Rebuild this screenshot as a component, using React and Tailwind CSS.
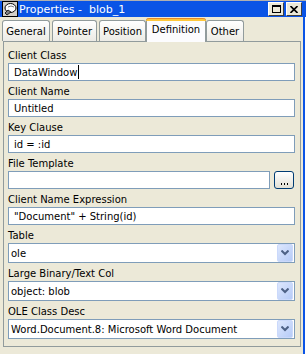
import React from "react";

const font = { fontFamily: '"DejaVu Sans", Verdana, sans-serif' };

const TitleIcon = () => (
	<svg width="16" height="16" viewBox="0 0 16 16">
		<rect x="0.5" y="0.5" width="15" height="15" fill="#d4d0c8" stroke="#000" />
		<ellipse cx="8.5" cy="7" rx="5.5" ry="4.5" fill="#fff" stroke="#000" />
		<path d="M3 12 L6 9 L9 11 L5 14 Z" fill="#808080" stroke="#000" strokeWidth="0.8" />
		<path d="M6 6 Q9 4 12 6" stroke="#808080" fill="none" />
	</svg>
);

const Tab = ({ label, width, ml, selected }) =>
	selected ? (
		<div
			className={`relative z-10 ${width} ${ml} h-[24px] -mb-px bg-[#fcfcfe] border-x border-[#919b9c] rounded-t-[3px] flex flex-col`}
		>
			<div className="h-[3px] bg-[#ffc83c] border-t border-[#e68b2c] rounded-t-[3px] -mx-px" />
			<div className="flex-1 flex items-center justify-center pb-[4px] text-[10px] text-black">
				{label}
			</div>
		</div>
	) : (
		<div
			className={`${width} ${ml} h-[21px] border border-b-0 border-[#919b9c] rounded-t-[3px] bg-gradient-to-b from-white to-[#ecebe5] flex items-center justify-center pt-[1px] text-[10px] text-black`}
		>
			{label}
		</div>
	);

const Field = ({ label, children }) => (
	<div className="flex flex-col">
		<div className="h-[18px] pt-[4px] leading-[14px] text-[10px] text-black">{label}</div>
		{children}
	</div>
);

const TextBox = ({ value, cursor, className = "w-full" }) => (
	<div
		className={`${className} h-[18px] bg-white border border-[#7f9db9] pl-[5px] flex items-center text-[10px] text-black whitespace-pre`}
	>
		{value}
		{cursor && <span className="inline-block w-px h-[14px] bg-black ml-px" />}
	</div>
);

const Select = ({ value }) => (
	<div className="w-full h-[20px] bg-white border border-[#7f9db9] pl-[2px] pr-px py-px flex items-center text-[10px] text-black">
		<span className="flex-1">{value}</span>
		<div className="w-[16px] h-[18px] rounded-[2px] bg-gradient-to-br from-[#dde7fd] to-[#b6cbf7] border border-[#cbd9fb] flex items-center justify-center">
			<svg width="8" height="6" viewBox="0 0 8 6">
				<path d="M0.5 0.5 L4 4 L7.5 0.5" stroke="#4d6185" strokeWidth="2" fill="none" />
			</svg>
		</div>
	</div>
);

export default function App() {
	return (
		<div className="w-[306px] h-[354px] bg-[#ece9d8] flex flex-col overflow-hidden" style={font}>
			<div className="h-[17px] border-t border-[#b0b0b0] bg-[#0a54e6] flex items-center pl-[2px] pr-[4px]">
				<TitleIcon />
				<span className="ml-[1px] text-[11px] text-white whitespace-pre leading-none">Properties -  blob_1</span>
				<div className="flex-1" />
				<div className="w-[16px] h-[14px] bg-[#ece9d8] border border-t-white border-l-white border-r-[#404040] border-b-[#404040] flex items-center justify-center">
					<div className="w-[9px] h-[8px] border border-black border-t-2" />
				</div>
				<div className="ml-[2px] w-[16px] h-[14px] bg-[#ece9d8] border border-t-white border-l-white border-r-[#404040] border-b-[#404040] flex items-center justify-center">
					<svg width="8" height="7" viewBox="0 0 8 7">
						<path d="M0.5 0 L7.5 7 M7.5 0 L0.5 7" stroke="#000" strokeWidth="1.6" />
					</svg>
				</div>
			</div>
			<div className="flex flex-1">
				<div className="flex-1 flex flex-col">
					<div className="flex items-end h-[24px]">
						<Tab label="General" width="w-[48px]" ml="ml-[2px]" />
						<Tab label="Pointer" width="w-[45px]" ml="ml-[2px]" />
						<Tab label="Position" width="w-[47px]" ml="ml-[2px]" />
						<Tab label="Definition" width="w-[60px]" ml="ml-0" selected />
						<Tab label="Other" width="w-[38px]" ml="ml-0" />
					</div>
					<div className="ml-[3px] mr-[2px] h-[306px] border border-[#919b9c] bg-[#ece9d8] pt-[3px] pl-[4px] pr-[5px] flex flex-col">
						<Field label="Client Class">
							<TextBox value="DataWindow" cursor />
						</Field>
						<Field label="Client Name">
							<TextBox value="Untitled" />
						</Field>
						<Field label="Key Clause">
							<TextBox value="id = :id" />
						</Field>
						<Field label="File Template">
							<div className="flex">
								<TextBox value="" className="w-[262px]" />
								<div className="ml-[4px] w-[20px] h-[18px] rounded-[3px] border border-[#003c74] bg-gradient-to-b from-white to-[#e3e1d6] flex items-end justify-center pb-[3px]">
									<div className="flex gap-[2px]">
										<div className="w-px h-[2px] bg-black" />
										<div className="w-px h-[2px] bg-black" />
										<div className="w-px h-[2px] bg-black" />
									</div>
								</div>
							</div>
						</Field>
						<Field label="Client Name Expression">
							<TextBox value={'"Document" + String(id)'} />
						</Field>
						<Field label="Table">
							<Select value="ole" />
						</Field>
						<Field label="Large Binary/Text Col">
							<Select value="object: blob" />
						</Field>
						<Field label="OLE Class Desc">
							<Select value="Word.Document.8: Microsoft Word Document" />
						</Field>
					</div>
				</div>
				<div className="w-[3px] flex">
					<div className="w-[2px] bg-[#0a54e6]" />
					<div className="w-px bg-white" />
				</div>
			</div>
		</div>
	);
}
